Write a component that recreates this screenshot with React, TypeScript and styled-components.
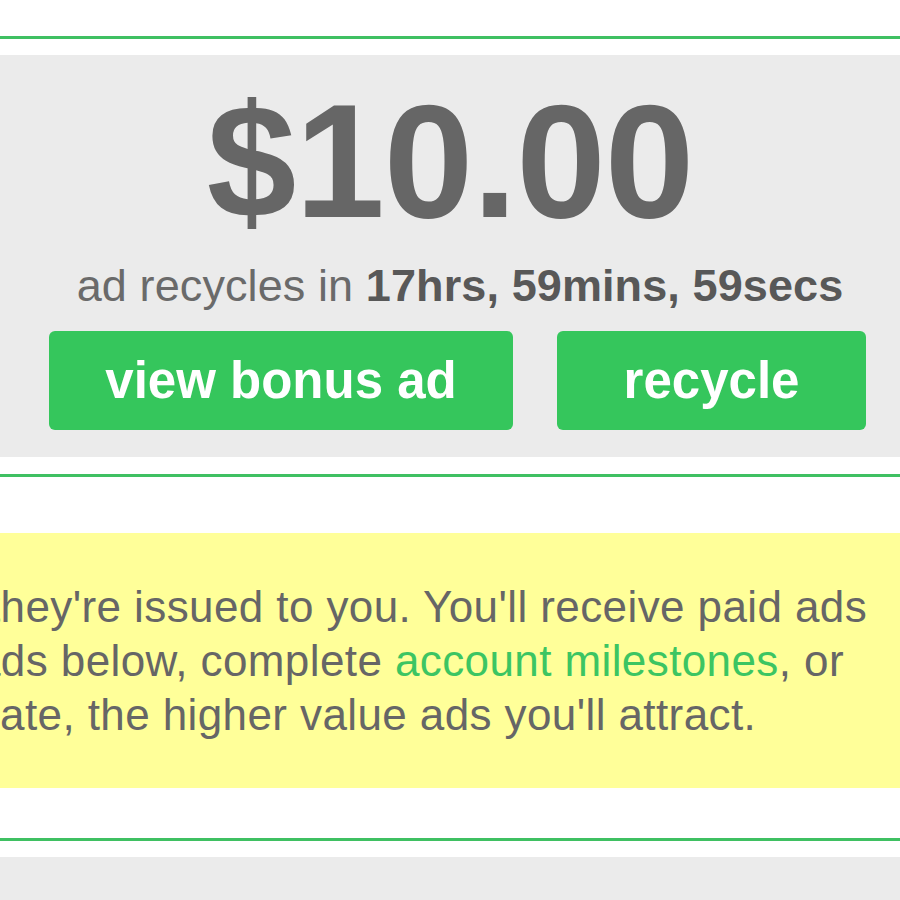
import { createGlobalStyle } from "styled-components";
import styled from "styled-components";

const GlobalStyle = createGlobalStyle`
  html, body {
    margin: 0;
    padding: 0;
    background: #ffffff;
  }
  body {
    font-family: "Liberation Sans", Arial, sans-serif;
    overflow: hidden;
  }
`;

const Page = styled.div`
  width: 900px;
  height: 900px;
  overflow: hidden;
  padding-top: 36px;
  box-sizing: border-box;
`;

const Section = styled.section<{ $gap: number; $after?: number }>`
  border-top: 3px solid #3fc062;
  padding-top: ${(p) => p.$gap}px;
  margin-bottom: ${(p) => p.$after ?? 0}px;
`;

const Panel = styled.div`
  background: #ebebeb;
  padding: 26px 0 27px;
  display: flex;
  flex-direction: column;
  align-items: center;
  color: #666666;
`;

const Price = styled.div`
  font-size: 161px;
  font-weight: 700;
  line-height: 160px;
  letter-spacing: -1px;
  color: #666666;
`;

const Countdown = styled.div`
  margin-top: 18px;
  font-size: 45px;
  line-height: 53px;
  letter-spacing: 0.1px;
  color: #6a6a6a;
  padding-left: 20px;

  strong {
    color: #585858;
    font-weight: 700;
  }
`;

const Actions = styled.div`
  align-self: stretch;
  display: grid;
  grid-template-columns: 464px 309px;
  column-gap: 44px;
  padding-left: 49px;
  margin-top: 19px;
`;

const ActionButton = styled.button`
  height: 99px;
  border: none;
  border-radius: 6px;
  background: #35c65c;
  color: #ffffff;
  font-family: "Liberation Sans", Arial, sans-serif;
  font-size: 51px;
  font-weight: 700;
  padding: 0;
  cursor: pointer;
`;

const Notice = styled.div`
  background: #ffff99;
  padding: 47px 0 46px;
  color: #666666;
  font-size: 44px;
  line-height: 54px;
  letter-spacing: 0.4px;
`;

const NoticeLine = styled.div<{ $shift: number }>`
  white-space: nowrap;
  margin-left: -${(p) => p.$shift}px;
`;

const Milestones = styled.a`
  color: #3cc562;
  text-decoration: none;
`;

const EmptyPanel = styled.div`
  background: #ebebeb;
  height: 60px;
`;

export default function App() {
  return (
    <>
      <GlobalStyle />
      <Page>
        <Section $gap={16} $after={17}>
          <Panel>
            <Price>$10.00</Price>
            <Countdown>
              ad recycles in <strong>17hrs, 59mins, 59secs</strong>
            </Countdown>
            <Actions>
              <ActionButton>view bonus ad</ActionButton>
              <ActionButton>recycle</ActionButton>
            </Actions>
          </Panel>
        </Section>
        <Section $gap={56} $after={50}>
          <Notice>
            <NoticeLine $shift={12}>
              they're issued to you. You'll receive paid ads
            </NoticeLine>
            <NoticeLine $shift={24}>
              ads below, complete{" "}
              <Milestones href="#">account milestones</Milestones>, or
            </NoticeLine>
            <NoticeLine $shift={15}>
              rate, the higher value ads you'll attract.
            </NoticeLine>
          </Notice>
        </Section>
        <Section $gap={16}>
          <EmptyPanel />
        </Section>
      </Page>
    </>
  );
}
